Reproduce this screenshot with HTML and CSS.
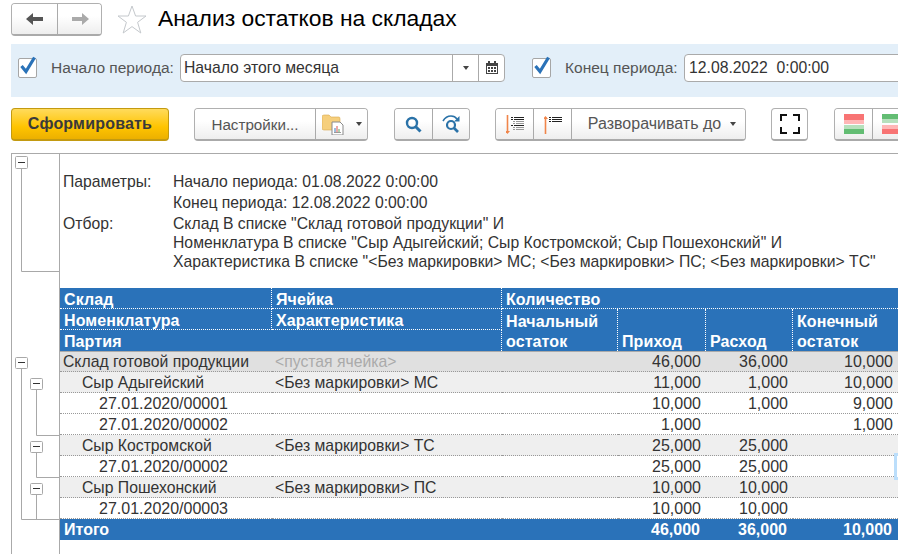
FILE: index.html
```html
<!DOCTYPE html>
<html lang="ru">
<head>
<meta charset="utf-8">
<title>Анализ остатков на складах</title>
<link rel="stylesheet" href="styles.css">
</head>
<body>
<div class="page">
  <header class="top">
    <div class="seg nav">
      <button class="btn w46"><svg width="18" height="12" viewBox="0 0 18 12"><path d="M0 6 7 0V4H17V8H7V12Z" fill="#555"/></svg></button>
      <button class="btn w45"><svg width="18" height="12" viewBox="0 0 18 12"><path d="M18 6 11 0V4H1V8H11V12Z" fill="#aaa"/></svg></button>
    </div>
    <svg class="star" width="30" height="29" viewBox="0 0 30 29"><path d="M15 1 18.6 11H29L20.6 17.3 23.8 28 15 21.6 6.2 28 9.4 17.3 1 11H11.4Z" fill="#fff" stroke="#c4c8cc"/></svg>
    <h1 class="title">Анализ остатков на складах</h1>
  </header>

  <section class="filters">
    <span class="check"><svg width="20" height="22" viewBox="0 0 20 22"><path d="M3.5 11 8 16.500 16.500 2.500" fill="none" stroke="#2a72b8" stroke-width="3.200"/></svg></span>
    <label class="lbl lbl-start">Начало периода:</label>
    <div class="field field-start">
      <span class="field-text">Начало этого месяца</span>
      <span class="field-btn"><i class="caret"></i></span>
      <span class="field-btn"><svg width="12" height="13" viewBox="0 0 12 13"><path d="M0 2H2V0H4V2H8V0H10V2H12V13H0ZM1 5V12H11V5Z" fill="#444"/><path d="M2 6H4V8H2ZM5 6H7V8H5ZM8 6H10V8H8ZM2 9H4V11H2ZM5 9H7V11H5ZM8 9H10V11H8Z" fill="#444"/></svg></span>
    </div>
    <span class="check check-end"><svg width="20" height="22" viewBox="0 0 20 22"><path d="M3.5 11 8 16.500 16.500 2.500" fill="none" stroke="#2a72b8" stroke-width="3.200"/></svg></span>
    <label class="lbl lbl-end">Конец периода:</label>
    <div class="field field-end"><span class="field-text field-text-end">12.08.2022&nbsp; 0:00:00</span></div>
  </section>

  <section class="toolbar">
    <button class="btn primary">Сформировать</button>
    <div class="seg group-settings">
      <button class="btn w122 label">Настройки...</button>
      <button class="btn w52">
        <svg width="24" height="22" viewBox="0 0 24 22"><path d="M0 4Q0 2 2 2H7L9 4H17Q18 4 18 6V17H2Q0 17 0 15Z" fill="#f6cf7c" stroke="#d9a94f" stroke-width=".6"/><path d="M10 9H18L21 12V22H10Z" fill="#fff" stroke="#8a8a8a"/><path d="M13 19V15" stroke="#3b7dbd"/><path d="M15 19V13" stroke="#d9534f"/><path d="M17 19V16" stroke="#5aa85a"/><path d="M12 19.500H19" stroke="#999"/></svg>
        <i class="caret"></i>
      </button>
    </div>
    <div class="seg group-search">
      <button class="btn w38"><svg width="17" height="17" viewBox="0 0 17 17"><circle cx="7" cy="7" r="5" fill="none" stroke="#2a72a8" stroke-width="2.400"/><path d="M10.500 10.500 15.500 15.500" stroke="#2a72a8" stroke-width="3"/></svg></button>
      <button class="btn w37"><svg width="19" height="19" viewBox="0 0 19 19"><path d="M1 6Q4 1 9 1 13 1 15 4" fill="none" stroke="#2a72a8" stroke-width="1.600"/><path d="M17.500 1V6.500H12Z" fill="#2a72a8"/><circle cx="9" cy="10" r="4" fill="none" stroke="#2a72a8" stroke-width="2.200"/><path d="M12 13 16 17" stroke="#2a72a8" stroke-width="2.600"/></svg></button>
    </div>
    <div class="seg group-expand">
      <button class="btn w38"><svg width="18" height="20" viewBox="0 0 18 20"><path d="M1.500 1V18" stroke="#f0854a" stroke-width="1.600"/><path d="M-1 17H4L1.500 20Z" fill="#f0854a"/><path d="M5 3.500H7M8 3.500H18M5 5.500H7M8 5.500H18M5 11.500H7M8 11.500H18" stroke="#222"/><path d="M7 7.500H9M10 7.500H18M7 9.500H9M10 9.500H18M7 13.500H9M10 13.500H18M7 15.500H9M10 15.500H18" stroke="#999"/></svg></button>
      <button class="btn w38"><svg width="18" height="20" viewBox="0 0 18 20"><path d="M1.500 3V20" stroke="#f0854a" stroke-width="1.600"/><path d="M-1 5H4L1.500 2Z" fill="#f0854a"/><path d="M5 3.500H7M8 3.500H18M5 5.500H7M8 5.500H18M5 7.500H7M8 7.500H18" stroke="#222"/></svg></button>
      <button class="btn w175 label-lg">Разворачивать до<i class="caret caret-gap"></i></button>
    </div>
    <button class="btn w37 solo"><svg width="20" height="20" viewBox="0 0 20 20"><path d="M0 7V0H7V2H2V7ZM13 0H20V7H18V2H13ZM20 13V20H13V18H18V13ZM7 20H0V13H2V18H7Z" fill="#111"/></svg></button>
    <div class="seg group-color">
      <button class="btn w38"><svg width="20" height="20" viewBox="0 0 20 20"><rect width="20" height="6" fill="#f87474"/><rect y="6" width="20" height="4" fill="#ffb6b6"/><rect y="11" width="20" height="4" fill="#b6e0bc"/><rect y="15" width="20" height="5" fill="#63bd73"/></svg></button>
      <button class="btn w38"><svg width="20" height="20" viewBox="0 0 20 20"><rect width="20" height="5" fill="#63bd73"/><rect y="5" width="20" height="4" fill="#b6e0bc"/><rect y="11" width="20" height="4" fill="#ffb6b6"/><rect y="15" width="20" height="5" fill="#f87474"/></svg></button>
    </div>
  </section>

  <section class="report">
    <div class="gutter">
      <svg class="tree" width="47" height="400" viewBox="12 154 47 400">
        <path d="M21.500 168V271.500H59M21.500 368V519.500H59M36.500 389V435.500H59M36.500 452V477.500H59M36.500 494V519.500" fill="none" stroke="#a8a8a8"/>
        <g fill="#fff" stroke="#a8a8a8">
          <rect x="15.500" y="156.500" width="12" height="12" rx="1"/>
          <rect x="15.500" y="357.500" width="12" height="11" rx="1"/>
          <rect x="30.500" y="378.500" width="12" height="11" rx="1"/>
          <rect x="30.500" y="441.500" width="12" height="11" rx="1"/>
          <rect x="30.500" y="483.500" width="12" height="11" rx="1"/>
        </g>
        <path d="M18 162.500H25M18 362.500H25M33 383.500H40M33 446.500H40M33 488.500H40" stroke="#333"/>
      </svg>
    </div>
    <div class="sheet">
      <div class="params">
        <div class="p-row tall"><span class="p-key">Параметры:</span><span>Начало периода: 01.08.2022 0:00:00</span></div>
        <div class="p-row tall"><span class="p-key"></span><span>Конец периода: 12.08.2022 0:00:00</span></div>
        <div class="p-row"><span class="p-key">Отбор:</span><span>Склад В списке "Склад готовой продукции" И</span></div>
        <div class="p-row"><span class="p-key"></span><span>Номенклатура В списке "Сыр Адыгейский; Сыр Костромской; Сыр Пошехонский" И</span></div>
        <div class="p-row"><span class="p-key"></span><span>Характеристика В списке "&lt;Без маркировки&gt; МС; &lt;Без маркировки&gt; ПС; &lt;Без маркировки&gt; ТС"</span></div>
      </div>
      <table class="grid">
        <colgroup><col class="c1"><col class="c2"><col class="c3"><col class="c4"><col class="c5"><col class="c6"></colgroup>
        <thead>
          <tr><th class="dr db">Склад</th><th class="dr db">Ячейка</th><th colspan="4" class="db">Количество</th></tr>
          <tr><th class="dr db">Номенклатура</th><th class="dr db">Характеристика</th><th rowspan="2" class="dr low"><span class="low-text">Начальный остаток</span></th><th rowspan="2" class="dr low"><span class="low-text">Приход</span></th><th rowspan="2" class="dr low"><span class="low-text">Расход</span></th><th rowspan="2" class="low"><span class="low-text">Конечный остаток</span></th></tr>
          <tr><th colspan="2" class="dr">Партия</th></tr>
        </thead>
        <tbody>
          <tr class="lvl0"><td>Склад готовой продукции</td><td class="empty">&lt;пустая ячейка&gt;</td><td></td><td class="n">46,000</td><td class="n">36,000</td><td class="n">10,000</td></tr>
          <tr class="lvl1"><td class="in1">Сыр Адыгейский</td><td>&lt;Без маркировки&gt; МС</td><td></td><td class="n">11,000</td><td class="n">1,000</td><td class="n">10,000</td></tr>
          <tr><td class="in2">27.01.2020/00001</td><td></td><td></td><td class="n">10,000</td><td class="n">1,000</td><td class="n">9,000</td></tr>
          <tr><td class="in2">27.01.2020/00002</td><td></td><td></td><td class="n">1,000</td><td class="n"></td><td class="n">1,000</td></tr>
          <tr class="lvl1"><td class="in1">Сыр Костромской</td><td>&lt;Без маркировки&gt; ТС</td><td></td><td class="n">25,000</td><td class="n">25,000</td><td class="n"></td></tr>
          <tr><td class="in2">27.01.2020/00002</td><td></td><td></td><td class="n">25,000</td><td class="n">25,000</td><td class="n cur"><i class="cursor"></i></td></tr>
          <tr class="lvl1"><td class="in1">Сыр Пошехонский</td><td>&lt;Без маркировки&gt; ПС</td><td></td><td class="n">10,000</td><td class="n">10,000</td><td class="n"></td></tr>
          <tr><td class="in2">27.01.2020/00003</td><td></td><td></td><td class="n">10,000</td><td class="n">10,000</td><td class="n"></td></tr>
          <tr class="total"><td>Итого</td><td></td><td></td><td class="n">46,000</td><td class="n">36,000</td><td class="n">10,000</td></tr>
        </tbody>
      </table>
    </div>
  </section>
</div>
</body>
</html>
```
FILE: styles.css
```css
* { box-sizing: border-box; }
html, body { margin: 0; padding: 0; }
body {
  width: 898px;
  height: 554px;
  overflow: hidden;
  background: #fff;
  font-family: "Liberation Sans", Arial, sans-serif;
  font-size: 15.75px;
  color: #333;
}
.page { width: 898px; height: 554px; overflow: hidden; }

.top { display: flex; align-items: flex-start; height: 44px; padding: 3px 0 0 11px; }
.nav { height: 31px; }
.star { margin: 2px 0 0 15px; }
.title { margin: 1px 0 0 11px; font-size: 22.85px; line-height: 28px; font-weight: 400; color: #000; white-space: nowrap; }

.filters { display: flex; align-items: center; height: 53px; margin-left: 11px; padding-bottom: 6px; width: 887px; background: #e3eff9; }
.check { position: relative; flex: none; width: 19px; height: 20px; margin-left: 7px; background: #fff; border: 1px solid #a6a6a6; border-radius: 2px; }
.check svg { position: absolute; left: -1px; top: -4px; }
.check-end { margin-left: 27px; }
.lbl { flex: none; color: #555; white-space: nowrap; font-size: 15.5px; }
.lbl-start { width: 129px; margin-left: 14px; }
.lbl-end { width: 119px; margin-left: 14px; }
.field { display: flex; flex: none; align-items: stretch; height: 28px; background: #fff; border: 1px solid #aaa; border-radius: 4px; }
.field-start { width: 325px; }
.field-end { width: 260px; }
.field-text { flex: 1; padding: 0 3px; line-height: 26px; color: #333; white-space: nowrap; }
.field-text-end { padding-left: 4px; }
.field-btn { display: flex; align-items: center; justify-content: center; width: 26px; border-left: 1px solid #aaa; }

.toolbar { display: flex; height: 33px; margin-top: 11px; padding-left: 11px; width: 960px; }
.btn {
  display: flex; align-items: center; justify-content: center; flex: none;
  height: 100%; padding: 0; margin: 0;
  font: 15.75px "Liberation Sans", Arial, sans-serif; color: #555;
  background: linear-gradient(#fff 40%, #eeeeee);
  border: 0; border-right: 1px solid #aaa;
}
.btn:last-child { border-right: 0; }
.seg, .solo { display: flex; flex: none; overflow: hidden; height: 33px; border: 1px solid #b0b0b0; border-bottom: 2px solid #aaa; border-radius: 4px; background: #fff; }
.seg .btn { height: 30px; }
.primary {
  width: 158px; height: 33px;
  font-weight: 700; font-size: 16px; letter-spacing: .2px; color: #3a3a3a;
  background: linear-gradient(#ffdb5c, #ffc400 60%, #ecb000);
  border: 1px solid #c39a10; border-bottom-width: 2px; border-radius: 4px;
}
.group-settings { margin-left: 25px; }
.group-search { margin-left: 26px; }
.group-expand { margin-left: 25px; }
.solo { margin-left: 25px; }
.group-color { margin-left: 26px; }
.w46 { width: 46px; } .w45 { width: 43px; }
.w122 { width: 121px; } .w52 { width: 51px; gap: 10px; }
.w38 { width: 38px; } .w37 { width: 36px; }
.solo.w37 { width: 37px; }
.w175 { width: 173px; }
.label { font-size: 15.2px; }
.btn.label-lg { font-size: 16px; padding-left: 7px; }
.caret { display: inline-block; flex: none; width: 0; height: 0; border: 3.5px solid transparent; border-top: 4px solid #444; border-bottom: 0; }
.caret-gap { margin-left: 9px; }

.report { display: flex; height: 401px; margin: 12px 0 0 11px; width: 887px; border-top: 1px solid #aaa; border-left: 1px solid #aaa; }
.gutter { flex: none; width: 48px; border-right: 1px solid #aaa; }
.tree { display: block; }
.sheet { flex: none; width: 838px; }
.params { height: 134px; padding: 17px 0 0 3px; }
.p-row { display: flex; line-height: 19px; white-space: nowrap; color: #333; }
.p-row.tall { line-height: 21px; }
.p-row.tall + .p-row.tall { margin-bottom: 1px; }
.p-key { flex: none; width: 110px; }

.grid { width: 838px; table-layout: fixed; border-collapse: separate; border-spacing: 0; }
.c1 { width: 212px; } .c2 { width: 230px; } .c3 { width: 116px; }
.c4 { width: 88px; } .c5 { width: 87px; } .c6 { width: 105px; }
.grid th {
  height: 21px; padding: 2px 4px 0; text-align: left; font-size: 16px; line-height: 18px; letter-spacing: .1px;
  font-weight: 700; color: #fff; background: #2a72b9; vertical-align: middle;
}
.grid th.db { padding-top: 3px; line-height: 17px; }
.grid th.low { vertical-align: bottom; padding: 0 4px; line-height: 20px; }
.low-text { display: block; margin-bottom: -1px; }
.grid th.dr { border-right: 1px dotted #fff; }
.grid th.db { border-bottom: 1px dotted #fff; }
.grid td { height: 21px; padding: 1px 0 0 3px; line-height: 19px; white-space: nowrap; color: #333; border-bottom: 1px dotted #999; }
.grid td.n { padding: 1px 5px 0 0; text-align: right; font-size: 16px; }
.grid tbody tr:first-child td { border-top: 1px solid #aaa; line-height: 18px; }
.lvl0 td { background: #e0e0e0; }
.lvl1 td { background: #efefef; }
.grid .in1 { padding-left: 22px; }
.grid .in2 { padding-left: 39px; font-size: 16px; }
.grid .empty { color: #aaa; }
.total td { background: #2a72b9; color: #fff; font-weight: 700; border-bottom: 0; font-size: 16px; }
.grid .total td { color: #fff; line-height: 20px; }
.grid .total td:first-child { padding-left: 4px; }
.grid .total td.n { padding-right: 6px; }
.cur { position: relative; }
.cursor { position: absolute; right: -3px; top: -3px; width: 7px; height: 27px; background: #fff; border: 3px solid #bbdefb; }
```
